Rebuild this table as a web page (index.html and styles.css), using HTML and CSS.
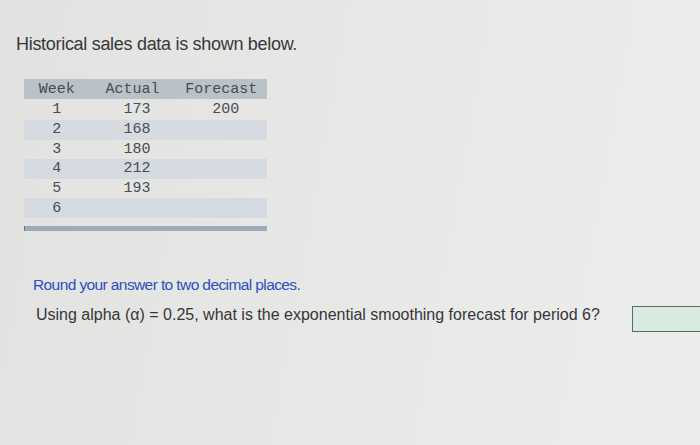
FILE: index.html
```html
<!DOCTYPE html>
<html>
<head>
<meta charset="utf-8">
<link rel="stylesheet" href="styles.css">
</head>
<body>
<div class="page">
  <h1 class="title">Historical sales data is shown below.</h1>
  <div class="table-wrap">
    <table class="data">
      <thead>
        <tr><th class="c1">Week</th><th class="c2">Actual</th><th class="c3">Forecast</th></tr>
      </thead>
      <tbody>
        <tr><td class="c1">1</td><td class="c2 num">173</td><td class="c3 num">200</td></tr>
        <tr class="alt"><td class="c1">2</td><td class="c2 num">168</td><td class="c3 num"></td></tr>
        <tr><td class="c1">3</td><td class="c2 num">180</td><td class="c3 num"></td></tr>
        <tr class="alt"><td class="c1">4</td><td class="c2 num">212</td><td class="c3 num"></td></tr>
        <tr><td class="c1">5</td><td class="c2 num">193</td><td class="c3 num"></td></tr>
        <tr class="alt"><td class="c1">6</td><td class="c2 num"></td><td class="c3 num"></td></tr>
      </tbody>
    </table>
    <div class="table-foot"></div>
  </div>
  <div class="question">
    <p class="hint">Round your answer to two decimal places.</p>
    <div class="ask">
      <p class="prompt">Using alpha (α) = 0.25, what is the exponential smoothing forecast for period 6?</p>
      <input class="answer" type="text">
    </div>
  </div>
</div>
</body>
</html>
```

FILE: styles.css
```css
html, body {
  margin: 0;
  padding: 0;
  height: 100%;
}
body {
  background: linear-gradient(100deg, #e2e2e0 0%, #e7e8e6 45%, #eceeec 100%);
  font-family: "Liberation Sans", Arial, sans-serif;
  color: #3b3b3d;
  overflow: hidden;
}
.page {
  padding: 33px 0 0 16px;
}
.title {
  margin: 0;
  font-size: 18px;
  letter-spacing: -0.3px;
  font-weight: normal;
  line-height: 22px;
  color: #38383a;
}
.table-wrap {
  margin: 24px 0 0 8px;
  width: 243px;
}
.data {
  border-collapse: collapse;
  width: 243px;
  font-family: "Liberation Mono", "Courier New", monospace;
  font-size: 15px;
  color: #4a4c50;
}
.data th {
  background: #b9c1c9;
  font-weight: normal;
  height: 18px;
  padding: 2px 0 0;
  line-height: 16px;
  text-align: center;
}
.data td {
  height: 19.6px;
  padding: 0;
  line-height: 19px;
  text-align: center;
}
.data tbody tr:first-child td { height: 21px; line-height: 20px; }
.data .c1 { width: 72px; }
.data .c2 { width: 84px; }
.data .c3 { width: 87px; }
.data td.num { padding-left: 9px; }
.data tr.alt td { background: #d5dbe1; }
.table-foot {
  margin-top: 8px;
  height: 5px;
  background: #9eabb9;
  border-left: 1px solid #6a7480;
}
.question {
  padding: 44px 0 0 17px;
}
.hint {
  margin: 0;
  font-size: 15.5px;
  letter-spacing: -0.6px;
  line-height: 20px;
  color: #2c4fbf;
}
.ask {
  display: flex;
  align-items: flex-start;
  margin-top: 9px;
}
.prompt {
  margin: 0;
  font-size: 16px;
  line-height: 22px;
  white-space: nowrap;
  color: #363638;
  padding-left: 3px;
}
.answer {
  margin: 2px 0 0 32px;
  width: 80px;
  height: 26px;
  box-sizing: border-box;
  border: 1px solid #5c6670;
  background: #d9ebe1;
  padding: 0;
  flex-shrink: 0;
}
```
